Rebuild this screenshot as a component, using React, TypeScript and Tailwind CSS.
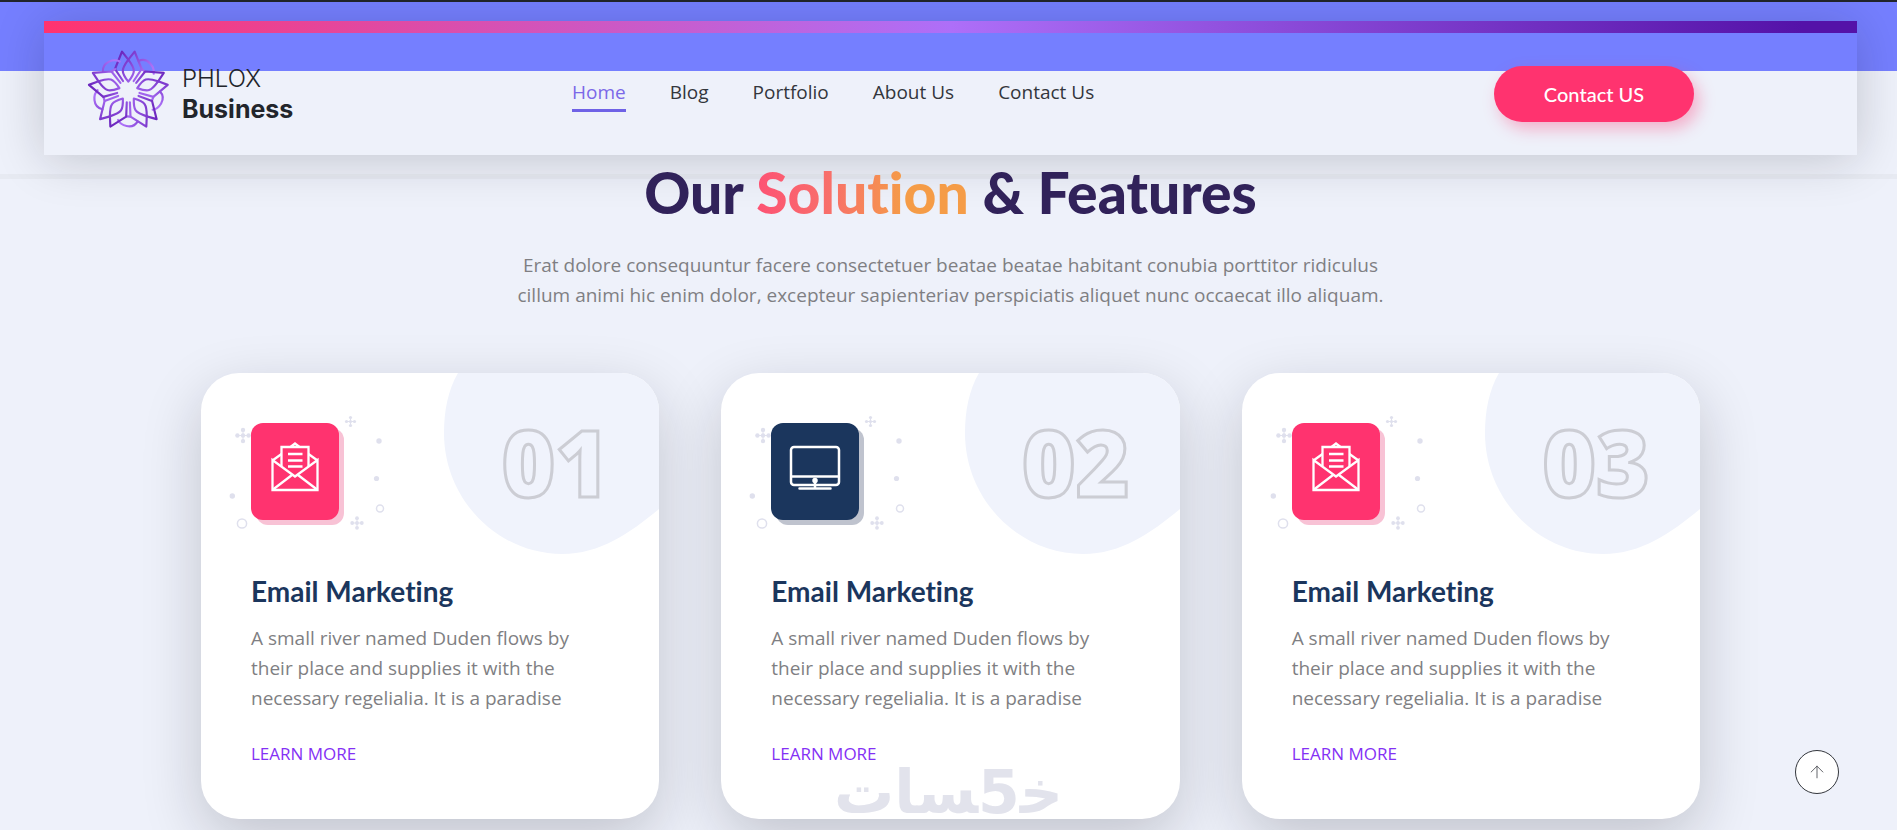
import { ArrowUp } from "lucide-react";

type IconName = "mail" | "monitor";

const navItems = ["Home", "Blog", "Portfolio", "About Us", "Contact Us"];

const features: { number: string; icon: IconName }[] = [
  { number: "01", icon: "mail" },
  { number: "02", icon: "monitor" },
  { number: "03", icon: "mail" },
];

const petalAngles = [0, 72, 144, 216, 288];

function LogoMark() {
  return (
    <svg viewBox="0 0 270 264" className="h-[88px] w-[90px] shrink-0" fill="none" aria-hidden="true">
      <defs>
        <linearGradient id="petal" x1="-60" y1="-110" x2="40" y2="-30" gradientUnits="userSpaceOnUse">
          <stop offset="0" stopColor="#5a12ae" />
          <stop offset="1" stopColor="#ad72f8" />
        </linearGradient>
      </defs>
      <g stroke="url(#petal)" strokeWidth="6.5" strokeLinejoin="round" strokeLinecap="round">
        {petalAngles.map((angle) => (
          <g key={angle} transform={`translate(133 135) rotate(${angle})`}>
            <path d="M0 -28C-22 -56 -22 -64 0 -94C22 -64 22 -56 0 -28Z" />
            <path d="M0 -94L-19 -118L-40 -66L-16 -30" />
            <path d="M0 -94L19 -118L40 -66L16 -30" />
            <path d="M40 -66L50 -58" />
            <path d="M31 -90C42 -95 56 -93 66 -82C75 -72 78 -62 76 -52" />
          </g>
        ))}
      </g>
    </svg>
  );
}

function Sparkle({ x, y, step, r }: { x: number; y: number; step: number; r: number }) {
  return (
    <g transform={`translate(${x} ${y})`}>
      <path d={`M${-step} 0H${step}M0 ${-step}V${step}`} stroke="#dfe0ed" strokeWidth="1" />
      <circle r={r} />
      <circle cx={-step} r={r} />
      <circle cx={step} r={r} />
      <circle cy={-step} r={r} />
      <circle cy={step} r={r} />
    </g>
  );
}

function Confetti() {
  return (
    <svg
      viewBox="0 0 165 125"
      className="absolute -left-[26px] -top-[13px] h-[125px] w-[165px]"
      fill="#dfe0ed"
      aria-hidden="true"
    >
      <Sparkle x={18} y={25.5} step={5.6} r={2.2} />
      <Sparkle x={125.5} y={11.5} step={4} r={1.6} />
      <Sparkle x={132} y={113} step={4.8} r={1.9} />
      <circle cx="154" cy="31" r="2.7" />
      <circle cx="151.5" cy="68.5" r="2.6" />
      <circle cx="7.3" cy="86" r="2.7" />
      <circle cx="17" cy="113.5" r="4.6" fill="none" stroke="#dfe0ed" strokeWidth="1.5" />
      <circle cx="155" cy="98.5" r="3.5" fill="none" stroke="#dfe0ed" strokeWidth="1.5" />
    </svg>
  );
}

function MailIcon() {
  return (
    <svg viewBox="0 0 48 52" className="h-[52px] w-12" fill="none" stroke="#fff" strokeWidth="2.3" aria-hidden="true">
      <path d="M1.5 19V49H46.5V19L24 35.5Z" />
      <path d="M2 48.5L21 34M46 48.5L27 34" />
      <path d="M1.5 19.5L10.5 13M46.5 19.5L37.5 13" />
      <path d="M10.5 25V6H37.5V25" />
      <path d="M19.5 6L24 2.5L28.5 6" />
      <path d="M17 13H31.5M17 19.5H31.5M17 25.5H31.5" />
    </svg>
  );
}

function MonitorIcon() {
  return (
    <svg viewBox="0 0 52 46" className="h-[46px] w-[52px]" fill="none" stroke="#fff" strokeWidth="2.5" aria-hidden="true">
      <rect x="2" y="2" width="48" height="38" rx="3" />
      <path d="M2 31.5H50" />
      <circle cx="26" cy="35.5" r="1.5" fill="#fff" />
      <path d="M26 37V43M10.5 43.5H41.5" strokeLinecap="round" />
    </svg>
  );
}

function FeatureCard({ number, icon }: { number: string; icon: IconName }) {
  return (
    <article className="relative rounded-[38px] bg-white px-[50px] pb-[53px] pt-[50px] shadow-[0_20px_60px_rgba(20,22,28,0.2)]">
      <svg
        viewBox="0 0 219 182"
        className="absolute right-0 top-0 h-[182px] w-[219px] rounded-tr-[38px]"
        aria-hidden="true"
      >
        <path d="M18 0C8 17 4 38 4 60C4 127 58 181 122 181C160 181 190 160 219 136V0Z" fill="#f0f3fc" />
      </svg>

      <div className="relative flex h-[97px] items-start justify-between">
        <Confetti />
        {icon === "mail" ? (
          <div className="relative flex h-[97px] w-[88px] justify-center rounded-xl bg-[#ff336f] pt-[18px] shadow-[5px_5px_0_#f8c2d5]">
            <MailIcon />
          </div>
        ) : (
          <div className="relative flex h-[97px] w-[88px] justify-center rounded-xl bg-[#1b365d] pt-[22px] shadow-[5px_5px_0_#bfc3ce]">
            <MonitorIcon />
          </div>
        )}
        <span className="font-['Open_Sans',sans-serif] text-[92px] font-extrabold leading-[78px] text-transparent [-webkit-text-stroke:3px_#cccdd4]">
          {number}
        </span>
      </div>

      <h3 className="mt-[53px] font-[Lato,sans-serif] text-[28px] font-bold leading-9 text-[#1b365d] [font-variant-ligatures:none]">
        Email Marketing
      </h3>
      <p className="mt-[14px] font-['Open_Sans',sans-serif] text-[19px] leading-[30px] text-[#7f7f83]">
        A small river named Duden flows by
        <br />
        their place and supplies it with the
        <br />
        necessary regelialia. It is a paradise
      </p>
      <a href="#" className="mt-[29px] inline-block font-['Open_Sans',sans-serif] text-[17px] leading-6 text-[#8430f5]">
        LEARN MORE
      </a>
    </article>
  );
}

function Header() {
  return (
    <header className="border-b-[5px] border-t-2 border-b-[#e7eaf2] border-t-[#22252b] bg-[linear-gradient(#757fff_69px,transparent_69px)] pb-[19px] pl-11 pr-10 pt-[19px]">
      <div className="shadow-[0_4px_50px_rgba(20,22,28,0.2)]">
        <div className="h-3 bg-[linear-gradient(90deg,#ff336f,#ae6ff8_50%,#5412a8_97%)]" />
        <div className="grid h-[122px] grid-cols-[32%_1fr_auto] items-center pr-[163px]">
          <a href="#" className="flex items-center gap-2 pb-2 pl-10 text-[#22252b]">
            <LogoMark />
            <span className="pt-2 font-[Inter,sans-serif] leading-[30px]">
              <span className="block text-2xl font-light leading-[30px]">PHLOX</span>
              <span className="block text-[25px] font-bold leading-[30px]">Business</span>
            </span>
          </a>
          <nav className="flex gap-[44px] font-['Open_Sans',sans-serif] text-[19px] leading-[30px]">
            {navItems.map((item, i) => (
              <a
                key={item}
                href="#"
                className={
                  i === 0
                    ? "border-b-[3px] border-[#6f62e6] pb-[2px] text-[#7b68e8]"
                    : "border-b-[3px] border-transparent pb-[2px] text-[#33363c]"
                }
              >
                {item}
              </a>
            ))}
          </nav>
          <button
            type="button"
            className="h-14 w-[200px] rounded-full bg-[#ff336f] font-[Lato,sans-serif] text-[20px] font-medium text-white shadow-[5px_7px_16px_rgba(255,51,111,0.35)]"
          >
            Contact US
          </button>
        </div>
      </div>
    </header>
  );
}

export default function App() {
  return (
    <div className="relative min-h-screen overflow-hidden bg-[#eef1fa]">
      <Header />

      <main className="relative -mt-[17px] pb-[11px] pl-1">
        <h2 className="text-center font-[Lato,sans-serif] text-[57px] font-black leading-[60px] text-[#31225a] [font-variant-ligatures:none]">
          Our{" "}
          <span className="bg-[linear-gradient(90deg,#fd5274,#f8706a_35%,#f59c47_70%)] bg-clip-text text-transparent">
            Solution
          </span>{" "}
          &amp; Features
        </h2>
        <p className="mt-7 text-center font-['Open_Sans',sans-serif] text-[19px] leading-[30px] text-[#7f7f83]">
          Erat dolore consequuntur facere consectetuer beatae beatae habitant conubia porttitor ridiculus
          <br />
          cillum animi hic enim dolor, excepteur sapienteriav perspiciatis aliquet nunc occaecat illo aliquam.
        </p>

        <section className="mx-auto mt-[63px] grid max-w-[1499px] grid-cols-3 gap-[62px]">
          {features.map((feature) => (
            <FeatureCard key={feature.number} {...feature} />
          ))}
        </section>
      </main>

      {/* zero-width joiners keep the letters in their connected forms around the digit */}
      <div
        dir="rtl"
        className="pointer-events-none absolute bottom-4 left-1/2 -translate-x-1/2 whitespace-nowrap font-['DejaVu_Sans',sans-serif] text-[60px] font-bold leading-[44px] text-[#e2e3ec]"
      >
        {"خ\u200d5\u200dسات"}
      </div>

      <button
        type="button"
        aria-label="Back to top"
        className="fixed bottom-9 right-[58px] flex size-11 items-center justify-center rounded-full border border-[#33363c] bg-white text-[#44474d]"
      >
        <ArrowUp size={20} strokeWidth={1} />
      </button>
    </div>
  );
}
